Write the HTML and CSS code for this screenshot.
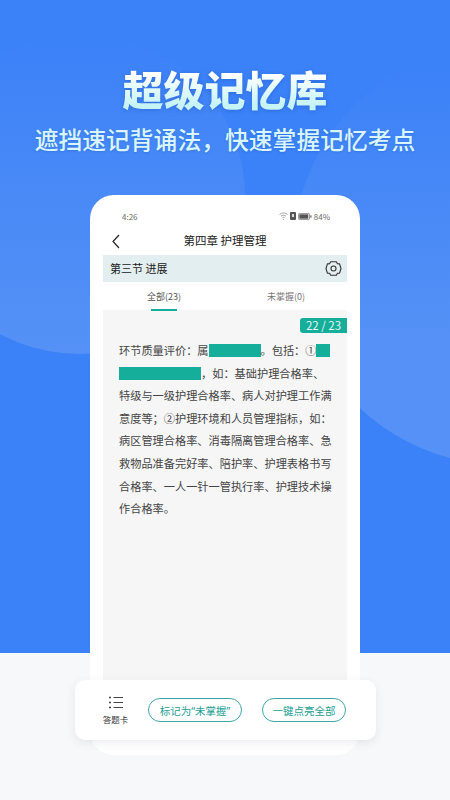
FILE: index.html
```html
<!DOCTYPE html>
<html lang="zh">
<head>
<meta charset="utf-8">
<title>超级记忆库</title>
<link rel="stylesheet" href="styles.css">
</head>
<body>
<div class="page">
  <div class="backdrop">
    <div class="blob blob-left"></div>
    <div class="blob blob-right"></div>
  </div>
  <header class="hero">
    <h1 class="title">超级记忆库</h1>
    <p class="subtitle">遮挡速记背诵法，快速掌握记忆考点</p>
  </header>
  <main class="phone">
    <div class="status">
      <span>4:26</span>
      <span class="status-right">
        <svg width="9" height="8" viewBox="0 0 9 8" fill="none" stroke="#888" stroke-width=".8"><path d="M.5 2.5c2.300-2 5.700-2 8 0M2 4.200c1.500-1.300 3.500-1.300 5 0M3.300 5.800c.7-.6 1.700-.6 2.400 0"/><circle cx="4.500" cy="7.200" r=".5" fill="#888" stroke="none"/></svg>
        <svg width="6" height="8" viewBox="0 0 6 8"><rect width="6" height="8" rx="1" fill="#555"/><rect x="2" y="2" width="2" height="3" fill="#ddd"/></svg>
        <svg width="14" height="7" viewBox="0 0 14 7"><rect x=".4" y=".4" width="11.200" height="6.200" rx="1.400" fill="none" stroke="#666" stroke-width=".7"/><rect x="1.300" y="1.300" width="9" height="4.400" fill="#555"/><rect x="12.300" y="2.300" width="1.200" height="2.400" fill="#666"/></svg>
        <span>84%</span>
      </span>
    </div>
    <div class="nav">
      <svg class="back" width="10" height="15" viewBox="0 0 10 15" fill="none" stroke="#222" stroke-width="1.200"><path d="M8 1 2 7.500 8 14"/></svg>
      <span>第四章 护理管理</span>
    </div>
    <div class="section">
      <span>第三节 进展</span>
      <svg width="17" height="17" viewBox="0 0 17 17" fill="none" stroke="#333" stroke-width="1.100"><path d="M5.600 1.800h5.800l1 1.900 2.200.2 1.400 4.600-1.400 4.600-2.200.2-1 1.900H5.600l-1-1.900-2.200-.2L1 8.500l1.400-4.600 2.200-.2z" stroke-linejoin="round"/><circle cx="8.500" cy="8.500" r="2.500"/></svg>
    </div>
    <div class="tabs">
      <div class="tab active">全部(23)</div>
      <div class="tab">未掌握(0)</div>
    </div>
    <div class="content">
      <div class="counter-row"><span class="counter">22 / 23</span></div>
      <p class="text">环节质量评价：属<span class="mask mask-a"></span>。包括：①<span class="mask mask-b"></span><br><span class="mask mask-c"></span>，如：基础护理合格率、<br>特级与一级护理合格率、病人对护理工作满<br>意度等；②护理环境和人员管理指标，如：<br>病区管理合格率、消毒隔离管理合格率、急<br>救物品准备完好率、陪护率、护理表格书写<br>合格率、一人一针一管执行率、护理技术操<br>作合格率。</p>
    </div>
  </main>
  <div class="actionbar">
    <div class="card-btn">
      <svg width="14" height="13" viewBox="0 0 14 13" fill="none" stroke="#444" stroke-width="1"><path d="M4.500 1.500H14M4.500 6.500H14M4.500 11.500H14"/><path d="M0 1.500h2M0 6.500h2M0 11.500h2" stroke-width="1.600"/></svg>
      <span>答题卡</span>
    </div>
    <button class="pill pill-a">标记为<span class="quote">“</span>未掌握<span class="quote">”</span></button>
    <button class="pill pill-b">一键点亮全部</button>
  </div>
</div>
</body>
</html>
```
FILE: styles.css
```css
* { box-sizing: border-box; }
html, body { margin: 0; padding: 0; }
body {
  width: 450px;
  height: 800px;
  overflow: hidden;
  font-family: "Noto Sans CJK SC", "Noto Sans", sans-serif;
}
.page {
  position: relative;
  width: 450px;
  height: 800px;
  background: #f7f8f9;
  overflow: hidden;
}
.backdrop {
  position: absolute;
  left: 0;
  top: 0;
  width: 450px;
  height: 653px;
  background: #3b81f8;
  overflow: hidden;
}
.blob { position: absolute; border-radius: 50%; }
.blob-left {
  width: 330px;
  height: 318px;
  left: -85px;
  top: 36px;
  background: linear-gradient(180deg, rgba(85, 145, 246, 0) 0%, rgba(85, 145, 246, .55) 50%, #5591f6 100%);
}
.blob-right {
  width: 422px;
  height: 422px;
  left: 293px;
  top: 43px;
  background: linear-gradient(180deg, rgba(85, 145, 246, 0) 5%, #5591f6 70%);
}
.hero {
  position: relative;
  text-align: center;
  padding-top: 59px;
}
.title {
  margin: 0;
  font-size: 41px;
  line-height: 58px;
  font-weight: 900;
  color: #e4f8fc;
  background: linear-gradient(180deg, #ffffff 25%, #c6f3f6 80%);
  -webkit-background-clip: text;
  background-clip: text;
  -webkit-text-fill-color: transparent;
  filter: drop-shadow(0 1px 2px rgba(20, 70, 170, .35));
}
.subtitle {
  margin: 4px 0 0;
  font-size: 23.800px;
  font-weight: 500;
  line-height: 36px;
  color: #d8f6fb;
  white-space: nowrap;
  text-shadow: 0 1px 2px rgba(20, 70, 170, .25);
}
.phone {
  position: relative;
  width: 270px;
  height: 560px;
  margin: 38px auto 0;
  padding: 0 13px;
  background: #fff;
  border-radius: 24px;
}
.status {
  display: flex;
  justify-content: space-between;
  align-items: center;
  height: 42px;
  padding: 0 17px 0 19px;
  font-size: 8px;
  color: #666;
}
.status-right { display: flex; align-items: center; gap: 2px; }
.nav {
  position: relative;
  height: 18px;
  margin-top: -6px;
  margin-bottom: 6px;
  text-align: center;
  font-size: 11.500px;
  line-height: 18px;
  color: #222;
}
.back { position: absolute; left: 8px; top: 3px; }
.section {
  display: flex;
  justify-content: space-between;
  align-items: center;
  height: 27px;
  padding: 0 5px 1px 7px;
  background: #e2eef0;
  font-size: 11px;
  color: #222;
}
.tabs { display: flex; height: 28px; }
.tab {
  position: relative;
  flex: 1;
  text-align: center;
  font-size: 9px;
  line-height: 29px;
  color: #777;
}
.tab.active { color: #555; }
.tab.active::after {
  content: "";
  position: absolute;
  left: 48px;
  bottom: -1px;
  width: 26px;
  height: 2px;
  background: #16ae9f;
}
.content {
  height: 430px;
  background: #f6f6f6;
  padding-top: 8px;
}
.counter-row { display: flex; justify-content: flex-end; }
.counter {
  width: 47px;
  height: 15px;
  background: #14ae9b;
  border-radius: 3px 0 0 3px;
  color: #e6f8f5;
  font-size: 11.500px;
  line-height: 15px;
  text-align: center;
}
.text {
  margin: 6px 0 0;
  padding-left: 16px;
  font-size: 11.200px;
  line-height: 22.600px;
  color: #444;
  white-space: nowrap;
}
.mask {
  display: inline-block;
  height: 13px;
  background: #14ae9b;
  vertical-align: -2px;
}
.mask-a { width: 52px; }
.mask-b { width: 14px; }
.mask-c { width: 82px; }
.actionbar {
  position: absolute;
  left: 75px;
  top: 680px;
  width: 301px;
  height: 60px;
  display: flex;
  align-items: center;
  padding-left: 27px;
  background: #fff;
  border-radius: 10px;
  box-shadow: 0 3px 10px rgba(60, 70, 90, .1);
}
.card-btn {
  display: flex;
  flex-direction: column;
  align-items: center;
  gap: 4px;
  width: 27px;
  font-size: 8.500px;
  line-height: 12px;
  color: #333;
  white-space: nowrap;
  margin-top: 1px;
}
.pill {
  height: 24px;
  padding: 0;
  background: #fff;
  border: 1px solid #3fa5a5;
  border-radius: 12px;
  color: #23a094;
  font-family: inherit;
  font-size: 10.500px;
  white-space: nowrap;
}
.quote { font-family: "Noto Sans", sans-serif; }
.pill-a { width: 94px; margin-left: 19px; }
.pill-b { width: 84px; margin-left: 20px; }
```
